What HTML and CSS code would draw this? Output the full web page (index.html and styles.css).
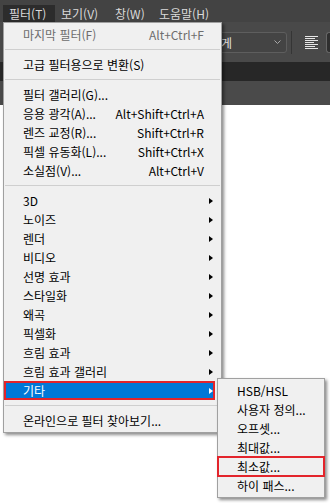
FILE: index.html
```html
<!DOCTYPE html>
<html lang="ko">
<head>
    <meta charset="UTF-8">
    <title>필터 메뉴</title>
    <link rel="stylesheet" href="styles.css">
</head>
<body>
    <div class="app">
        <div class="menubar">
            <span class="top-item open w-filter">필터(T)</span>
            <span class="top-item w-view">보기(V)</span>
            <span class="top-item w-window">창(W)</span>
            <span class="top-item">도움말(H)</span>
        </div>

        <div class="options-bar">
            <div class="dropdown">
                <span>굵게</span>
                <svg class="chevron" width="7" height="4" viewBox="0 0 7 4"><polyline points="0.5,0.5 3.5,3.5 6.5,0.5" fill="none" stroke="#a8a8a8" stroke-width="1"/></svg>
            </div>
            <div class="vsep"></div>
            <svg class="align-icon" width="13" height="13" viewBox="0 0 13 13">
                <rect x="0" y="0" width="13" height="1" fill="#e6e6e6"/>
                <rect x="0" y="2" width="10" height="1" fill="#e6e6e6"/>
                <rect x="0" y="4" width="13" height="1" fill="#e6e6e6"/>
                <rect x="0" y="6" width="9" height="1" fill="#e6e6e6"/>
                <rect x="0" y="8" width="13" height="1" fill="#e6e6e6"/>
                <rect x="0" y="10" width="10" height="1" fill="#e6e6e6"/>
                <rect x="0" y="12" width="13" height="1" fill="#e6e6e6"/>
            </svg>
            <div class="dark-box"></div>
        </div>
        <div class="tab-band"></div>
        <div class="ruler-band"></div>
        <div class="canvas"></div>

        <!-- 필터 드롭다운 메뉴 -->
        <div class="menu main-menu">
            <div class="item disabled"><span class="label">마지막 필터(F)</span><span class="shortcut">Alt+Ctrl+F</span></div>
            <div class="sep"></div>
            <div class="item"><span class="label">고급 필터용으로 변환(S)</span></div>
            <div class="sep"></div>
            <div class="item"><span class="label">필터 갤러리(G)...</span></div>
            <div class="item"><span class="label">응용 광각(A)...</span><span class="shortcut">Alt+Shift+Ctrl+A</span></div>
            <div class="item"><span class="label">렌즈 교정(R)...</span><span class="shortcut">Shift+Ctrl+R</span></div>
            <div class="item"><span class="label">픽셀 유동화(L)...</span><span class="shortcut">Shift+Ctrl+X</span></div>
            <div class="item"><span class="label">소실점(V)...</span><span class="shortcut">Alt+Ctrl+V</span></div>
            <div class="sep"></div>
            <div class="item"><span class="label">3D</span><span class="arrow"></span></div>
            <div class="item"><span class="label">노이즈</span><span class="arrow"></span></div>
            <div class="item"><span class="label">렌더</span><span class="arrow"></span></div>
            <div class="item"><span class="label">비디오</span><span class="arrow"></span></div>
            <div class="item"><span class="label">선명 효과</span><span class="arrow"></span></div>
            <div class="item"><span class="label">스타일화</span><span class="arrow"></span></div>
            <div class="item"><span class="label">왜곡</span><span class="arrow"></span></div>
            <div class="item"><span class="label">픽셀화</span><span class="arrow"></span></div>
            <div class="item"><span class="label">흐림 효과</span><span class="arrow"></span></div>
            <div class="item"><span class="label">흐림 효과 갤러리</span><span class="arrow"></span></div>
            <div class="item active marked"><span class="label">기타</span><span class="arrow"></span></div>
            <div class="sep"></div>
            <div class="item"><span class="label">온라인으로 필터 찾아보기...</span></div>
        </div>

        <!-- 기타 하위 메뉴 -->
        <div class="menu sub-menu">
            <div class="item"><span class="label">HSB/HSL</span></div>
            <div class="item"><span class="label">사용자 정의...</span></div>
            <div class="item"><span class="label">오프셋...</span></div>
            <div class="item"><span class="label">최대값...</span></div>
            <div class="item marked-out"><span class="label">최소값...</span></div>
            <div class="item"><span class="label">하이 패스...</span></div>
        </div>
    </div>
</body>
</html>
```

FILE: styles.css
```css
html, body {
    margin: 0;
    padding: 0;
}
body {
    width: 330px;
    height: 503px;
    overflow: hidden;
    background: white;
    font-family: "Noto Sans CJK KR", "Noto Sans", sans-serif;
    font-size: 12px;
}
.app {
    position: relative;
    width: 330px;
    height: 503px;
    display: flex;
    flex-direction: column;
}
.menubar {
    height: 22px;
    box-sizing: border-box;
    padding: 5px 0 0 3px;
    background: #434343;
    display: flex;
    color: #dadada;
}
.top-item {
    height: 17px;
    line-height: 17px;
    padding: 0 0 0 6px;
    box-sizing: border-box;
    flex-shrink: 0;
}
.w-filter { width: 52px; }
.w-view { width: 54px; }
.w-window { width: 44px; }
.top-item.open {
    background: #2c2c2c;
}
.options-bar {
    height: 40px;
    background: #494949;
    display: flex;
    align-items: center;
    overflow: hidden;
}
.options-bar > * {
    flex-shrink: 0;
}
.dropdown {
    margin-left: 205px;
    width: 82px;
    height: 21px;
    box-sizing: border-box;
    border: 1px solid #5e5e5e;
    border-radius: 3px;
    background: #444;
    color: #e2e2e2;
    display: flex;
    align-items: center;
    justify-content: space-between;
    padding: 0 5px 0 4px;
}
.chevron {
    display: block;
}
.vsep {
    margin-left: 4px;
    width: 1px;
    height: 23px;
    background: #353535;
}
.align-icon {
    margin-left: 13px;
    display: block;
}
.dark-box {
    margin-left: 8px;
    width: 12px;
    height: 21px;
    box-sizing: border-box;
    border: 1px solid #666;
    border-right: none;
    border-radius: 3px 0 0 3px;
    background: #2f2f2f;
}
.tab-band {
    height: 19px;
    background: #272727;
}
.ruler-band {
    height: 24px;
    background: #4a4a4a;
}
.canvas {
    flex: 1;
    background: white;
}

/* menus */
.menu {
    position: absolute;
    background: #f0f0f0;
    border: 1px solid #a0a0a0;
    padding: 2px 0;
    box-shadow: 2px 2px 3px rgba(0,0,0,0.45);
    color: #000;
}
.main-menu {
    left: 3px;
    top: 22px;
    width: 217px;
}
.sub-menu {
    left: 217px;
    top: 378px;
    width: 106px;
}
.item {
    height: 19px;
    line-height: 19px;
    display: flex;
    align-items: center;
    padding: 0 2px 0 19px;
    white-space: nowrap;
}
.main-menu .item {
    margin-right: 6px;
}
.item .label {
    flex: 1;
}
.shortcut {
    margin-right: 9px;
}
.item.disabled {
    color: #6d6d6d;
}
.arrow {
    width: 0;
    height: 0;
    border-top: 3.5px solid transparent;
    border-bottom: 3.5px solid transparent;
    border-left: 4px solid #000;
}
.item.active {
    background: #0078d7;
    color: white;
}
.item.active .arrow {
    border-left-color: white;
}
.item.marked {
    box-shadow: inset 0 0 0 2px #e3242b;
}
.item.marked-out {
    outline: 2px solid #e3242b;
    outline-offset: -1px;
}
.sep {
    height: 1px;
    background: #cfcfcf;
    margin: 5px 1px 5px 1px;
}
```
